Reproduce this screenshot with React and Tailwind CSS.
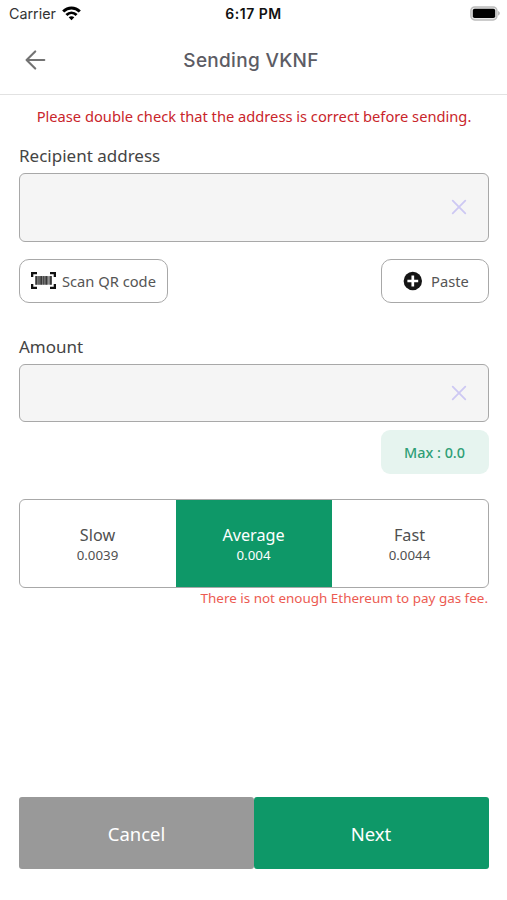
import { useState } from "react";

const fees = [
  { id: "slow", label: "Slow", value: "0.0039" },
  { id: "average", label: "Average", value: "0.004" },
  { id: "fast", label: "Fast", value: "0.0044" },
];

export default function App() {
  const [address, setAddress] = useState("");
  const [amount, setAmount] = useState("");
  const [fee, setFee] = useState("average");

  return (
    <div className="flex h-[900px] w-[507px] flex-col overflow-hidden bg-white font-['Noto_Sans',sans-serif] text-[#444]">
      <StatusBar />

      {/* Header */}
      <header className="grid h-[67px] shrink-0 grid-cols-[70px_1fr_75px] items-center border-b border-[#e2e2e2] pb-px">
        <button className="pb-px pl-[25px]" aria-label="Back">
          <BackIcon />
        </button>
        <h1 className="pt-px text-center font-[Inter,sans-serif] text-[19px] font-medium tracking-[0.3px] text-[#5c5c64]">
          Sending VKNF
        </h1>
      </header>

      <main className="flex flex-1 flex-col pr-[18px] pb-[31px] pl-[19px]">
        <p className="mt-[11px] text-center text-[14.68px] leading-5 whitespace-nowrap text-[#c9252b]">
          Please double check that the address is correct before sending.
        </p>

        {/* Recipient */}
        <label className="mt-[18px] text-[17px] leading-6">Recipient address</label>
        <Field className="mt-[5px] h-[69px]" value={address} onChange={setAddress} />
        <div className="mt-[17px] flex justify-between">
          <button className="flex h-11 w-[149px] items-center gap-1.5 rounded-[10px] border border-[#a8a8a8] pl-[11px] text-[14.7px] text-[#555]">
            <ScanIcon />
            <span className="whitespace-nowrap">Scan QR code</span>
          </button>
          <button className="flex h-11 w-[108px] items-center gap-2 rounded-[10px] border border-[#a8a8a8] pl-[21px] text-[14.7px] text-[#555]">
            <PlusIcon />
            Paste
          </button>
        </div>

        {/* Amount */}
        <label className="mt-8 text-[17px] leading-6">Amount</label>
        <Field className="mt-[5px] h-[58px]" value={amount} onChange={setAmount} />
        <button className="mt-2 h-11 w-[108px] self-end rounded-[9px] bg-[#e6f4ef] pt-px pr-px text-[14.4px] font-medium text-[#2f9f76]">
          Max : 0.0
        </button>

        {/* Gas fee */}
        <div className="mt-[25px] grid h-[89px] grid-cols-3 overflow-hidden rounded-md border border-[#a8a8a8]">
          {fees.map((f) => (
            <button
              key={f.id}
              onClick={() => setFee(f.id)}
              className={`flex flex-col items-center justify-center pt-0.5 pr-px ${
                fee === f.id ? "bg-[#0e9868] text-white" : "text-[#505050]"
              }`}
            >
              <span className="text-[16.2px] leading-[22px]">{f.label}</span>
              <span className="text-[13.3px] leading-[19px]">{f.value}</span>
            </button>
          ))}
        </div>
        <p className="pr-px text-right text-[13.45px] leading-5 whitespace-nowrap text-[#ec5b52]">
          There is not enough Ethereum to pay gas fee.
        </p>

        <div className="mt-auto grid h-[72px] grid-cols-2 text-[18.5px] text-white">
          <button className="rounded-[3px] bg-[#999] pt-0.5">Cancel</button>
          <button className="rounded-[3px] bg-[#0e9868] pt-0.5 pr-px">Next</button>
        </div>
      </main>
    </div>
  );
}

function Field({ value, onChange, className }) {
  return (
    <div className={`flex items-center rounded-md border border-[#a8a8a8] bg-[#f5f5f5] pr-[21px] ${className}`}>
      <input
        value={value}
        onChange={(e) => onChange(e.target.value)}
        className="h-full flex-1 bg-transparent px-3 outline-none"
      />
      <button className="pb-px" onClick={() => onChange("")} aria-label="Clear">
        <svg width="16" height="16" viewBox="0 0 16 16" stroke="#cdc8f3" strokeWidth="1.8" strokeLinecap="round">
          <path d="M1.7 1.7l12.6 12.6M14.3 1.7L1.7 14.3" />
        </svg>
      </button>
    </div>
  );
}

function StatusBar() {
  return (
    <div className="grid h-7 shrink-0 grid-cols-3 items-center font-[Inter,sans-serif] text-[14px] text-[#111]">
      <div className="flex items-center gap-1.5 pl-[9px]">
        <span className="text-[14.3px] text-[#333]">Carrier</span>
        <svg width="19" height="15" viewBox="0 0 19 15" fill="none" stroke="#000" strokeWidth="2.9" className="mb-0.5">
          <path d="M1.2 5.6C6 .7 13 .7 17.8 5.6" />
          <path d="M4.4 9c3-2.9 7.2-2.9 10.2 0" />
          <path d="M6.7 11.3c1.6-1.5 4-1.5 5.6 0L9.5 14.2z" fill="#000" stroke="none" />
        </svg>
      </div>
      <span className="pb-px text-center font-semibold tracking-[0.5px]">6:17 PM</span>
      <div className="flex justify-end pr-[7px] pb-0.5">
        <svg width="30" height="15" viewBox="0 0 30 15">
          <rect x=".9" y=".9" width="26" height="13" rx="3.8" fill="#e8e8e8" stroke="#bcbcbc" strokeWidth="1.5" />
          <rect x="2.8" y="2.8" width="22.4" height="9.2" rx="1.8" fill="#000" />
          <path d="M28.2 5v4.6c2-.9 2-3.7 0-4.6z" fill="#aaa" />
        </svg>
      </div>
    </div>
  );
}

function BackIcon() {
  return (
    <svg width="21" height="20" viewBox="0 0 21 20" fill="none" stroke="#737373" strokeWidth="2.1" strokeLinecap="round" strokeLinejoin="round">
      <path d="M19.3 10H1.8M10.2 1.4L1.6 10l8.6 8.6" />
    </svg>
  );
}

function ScanIcon() {
  return (
    <svg width="25" height="17" viewBox="0 0 25 17" fill="#111" className="mb-px shrink-0">
      <path d="M0 0h6v2.3H2.3V5H0zM19 0h6v5h-2.3V2.3H19zM0 12h2.3v2.7H6V17H0zM22.7 12H25v5h-6v-2.3h3.7z" />
      <path d="M4.3 4.1h16.5v8.6H4.3z" opacity=".45" />
      <path d="M4.3 4.1h2v8.6h-2zM7.5 4.1h1v8.6h-1zM9.3 4.1h2v8.6h-2zM12.2 4.1h1.2v8.6h-1.2zM14.4 4.1h2v8.6h-2zM18.8 4.1h2v8.6h-2z" opacity=".7" />
    </svg>
  );
}

function PlusIcon() {
  return (
    <svg width="20" height="20" viewBox="0 0 20 20" className="mb-px shrink-0">
      <circle cx="9.8" cy="10" r="9.2" fill="#151515" />
      <path d="M9.8 4.6v10.8M4.4 10h10.8" stroke="#fff" strokeWidth="2.7" />
    </svg>
  );
}
